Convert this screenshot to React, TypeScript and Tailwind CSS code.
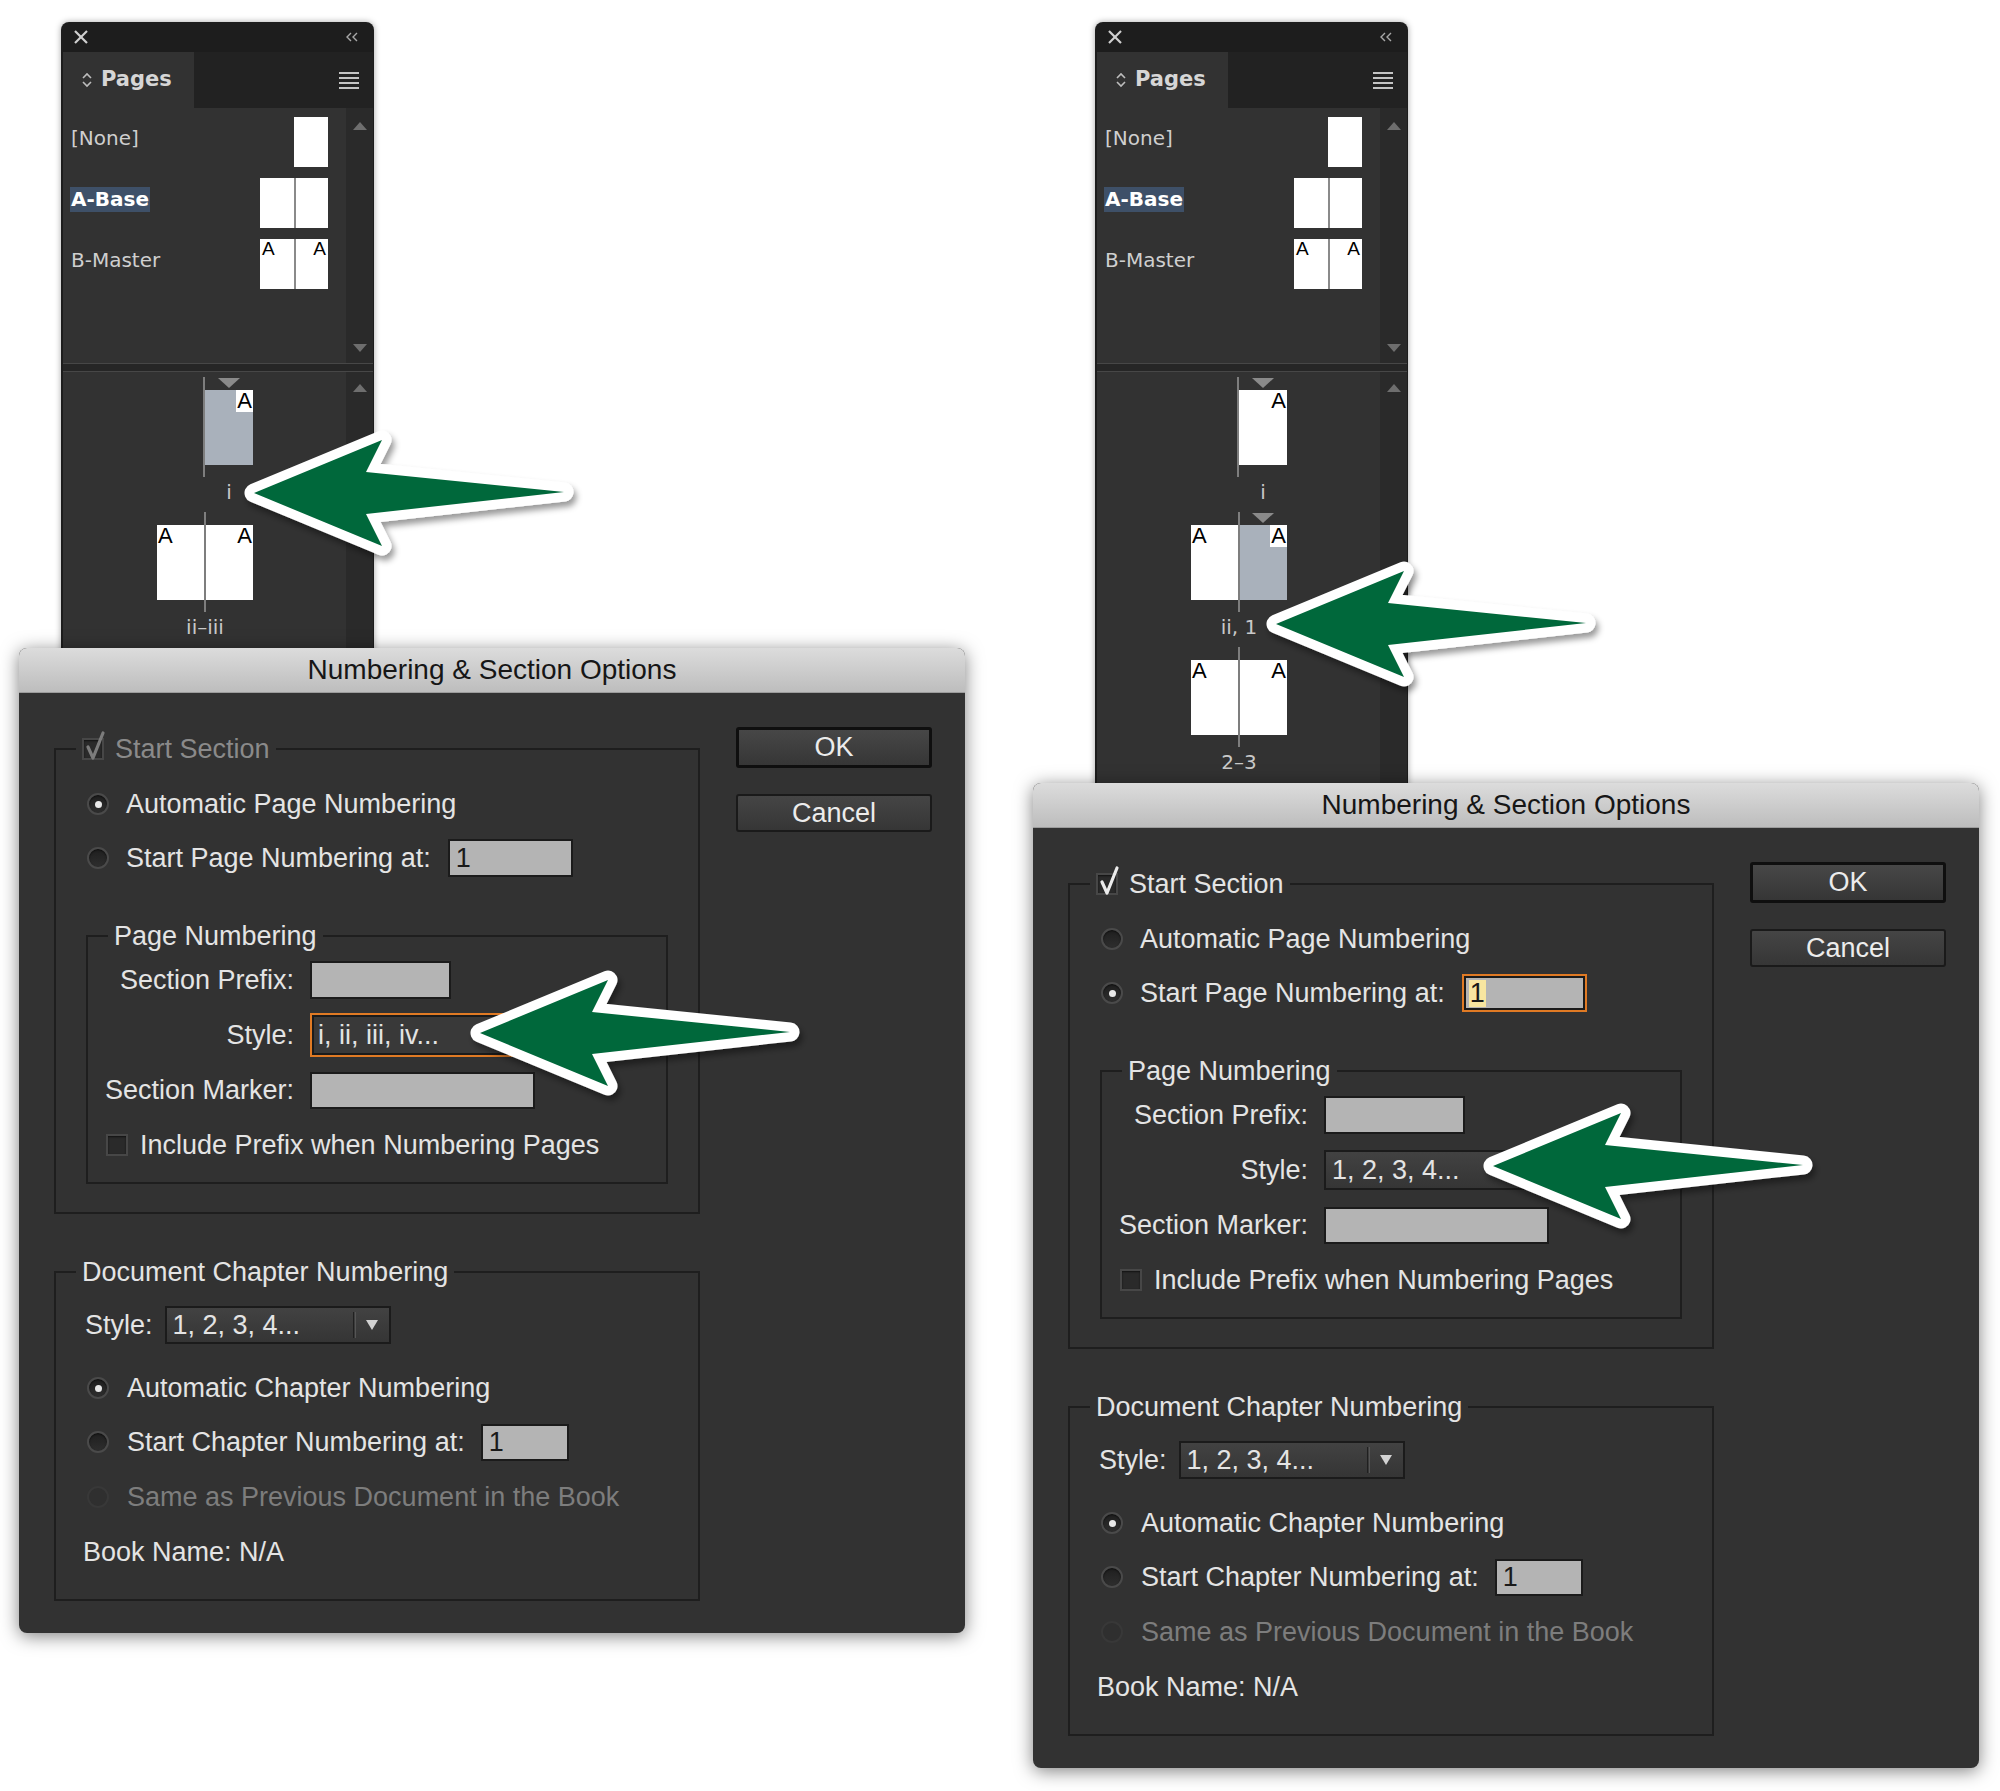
import React from "react";

type PageRowData = {
  spread?: boolean;
  sel?: boolean;
  marker?: boolean;
  label: string;
};

const leftRows: PageRowData[] = [
  { sel: true, marker: true, label: "i" },
  { spread: true, label: "ii–iii" },
];

const rightRows: PageRowData[] = [
  { marker: true, label: "i" },
  { spread: true, sel: true, marker: true, label: "ii, 1" },
  { spread: true, label: "2–3" },
];

const Chevrons = () => (
  <svg width="12" height="18" viewBox="0 0 12 18" fill="none" stroke="#bdbdbd" strokeWidth="1.6">
    <polyline points="2,7 6,3 10,7" />
    <polyline points="2,11 6,15 10,11" />
  </svg>
);

const Page: React.FC<{ side: "l" | "r"; sel?: boolean }> = ({ side, sel }) => (
  <div
    className={`w-[48px] h-[75px] flex items-start ${side === "r" ? "justify-end" : "justify-start"} ${
      sel ? "bg-[#a9b1bb]" : "bg-white"
    }`}
  >
    <span
      className={`font-['Liberation_Sans',Arial,sans-serif] text-[22px] leading-[22px] px-[1px] text-black ${
        sel ? "bg-white" : ""
      }`}
    >
      A
    </span>
  </div>
);

const PageRow: React.FC<{ row: PageRowData }> = ({ row }) => (
  <div className={`flex flex-col ${row.spread ? "ml-[94px] w-[96px]" : "ml-[142px] w-[48px]"}`}>
    <div className="relative h-[100px] pt-[13px] flex">
      {row.spread && <Page side="l" />}
      <Page side="r" sel={row.sel} />
      {/* spine */}
      <span className={`absolute top-0 bottom-0 w-[2px] bg-[#7e7e7e] ${row.spread ? "left-[47px]" : "left-[-2px]"}`} />
      {row.marker && (
        <span
          className={`absolute top-[1px] w-0 h-0 border-l-[11px] border-r-[11px] border-t-[10px] border-l-transparent border-r-transparent border-t-[#8a8a8a] ${
            row.spread ? "left-[61px]" : "left-[13px]"
          }`}
        />
      )}
    </div>
    <div className="h-[30px] flex items-center justify-center text-[20px] text-[#c9c9c9] whitespace-nowrap">
      {row.label}
    </div>
  </div>
);

const UpArrow = () => (
  <span className="w-0 h-0 border-l-[7px] border-r-[7px] border-b-[8px] border-l-transparent border-r-transparent border-b-[#6e6e6e]" />
);
const DownArrow = () => (
  <span className="w-0 h-0 border-l-[7px] border-r-[7px] border-t-[8px] border-l-transparent border-r-transparent border-t-[#6e6e6e]" />
);

const MasterThumb: React.FC<{ kind: "single" | "blank" | "a" }> = ({ kind }) => {
  if (kind === "single") return <div className="w-[34px] h-[50px] bg-white" />;
  return (
    <div className="flex">
      <div className="w-[34px] h-[50px] bg-white flex items-start">
        {kind === "a" && (
          <span className="font-['Liberation_Sans',Arial,sans-serif] text-[19px] leading-[19px] pl-[2px] text-black">A</span>
        )}
      </div>
      <div className="w-[34px] h-[50px] bg-white border-l-2 border-[#8a8a8a] flex items-start justify-end">
        {kind === "a" && (
          <span className="font-['Liberation_Sans',Arial,sans-serif] text-[19px] leading-[19px] pr-[2px] text-black">A</span>
        )}
      </div>
    </div>
  );
};

const PagesPanel: React.FC<{ right?: boolean }> = ({ right }) => {
  const rows = right ? rightRows : leftRows;
  return (
    <div
      className={`absolute top-[22px] w-[313px] rounded-t-[8px] overflow-hidden bg-[#1d1d1d] flex flex-col font-['DejaVu_Sans',sans-serif] shadow-[0_0_6px_rgba(0,0,0,0.35)] ${
        right ? "left-[1095px] h-[790px]" : "left-[61px] h-[650px]"
      }`}
    >
      {/* title strip */}
      <div className="h-[30px] shrink-0 flex items-center justify-between pl-[13px] pr-[15px]">
        <svg width="14" height="14" viewBox="0 0 14 14" stroke="#d0d0d0" strokeWidth="2.2">
          <line x1="1" y1="1" x2="13" y2="13" />
          <line x1="13" y1="1" x2="1" y2="13" />
        </svg>
        <svg width="14" height="10" viewBox="0 0 14 10" fill="none" stroke="#a8a8a8" strokeWidth="1.4">
          <polyline points="6,1 2,5 6,9" />
          <polyline points="12,1 8,5 12,9" />
        </svg>
      </div>
      {/* tab row */}
      <div className="h-[56px] shrink-0 flex pl-[2px] pr-[1px]">
        <div className="w-[131px] bg-[#323232] flex items-center pl-[18px] gap-[8px]">
          <Chevrons />
          <span className="text-[21px] font-bold text-[#d6d6d6]">Pages</span>
        </div>
        <div className="flex-1 bg-[#222222] flex items-center justify-end pr-[14px]">
          <div className="flex flex-col gap-[3px]">
            <span className="block w-[20px] h-[2px] bg-[#c4c4c4]" />
            <span className="block w-[20px] h-[2px] bg-[#c4c4c4]" />
            <span className="block w-[20px] h-[2px] bg-[#c4c4c4]" />
            <span className="block w-[20px] h-[2px] bg-[#c4c4c4]" />
          </div>
        </div>
      </div>
      {/* masters */}
      <div className="h-[255px] shrink-0 flex mx-[2px] mr-[1px] bg-[#323232]">
        <div className="flex-1 flex flex-col gap-[11px] pt-[9px] pl-[7px] pr-[18px]">
          <div className="h-[50px] flex items-center justify-between">
            <span className="mb-[8px] px-[1px] text-[20px] text-[#cfcfcf]">[None]</span>
            <MasterThumb kind="single" />
          </div>
          <div className="h-[50px] flex items-center justify-between">
            <span className="mb-[8px] px-[1px] h-[25px] flex items-center bg-[#3e5068] text-[20px] font-bold text-white">
              A-Base
            </span>
            <MasterThumb kind="blank" />
          </div>
          <div className="h-[50px] flex items-center justify-between">
            <span className="mb-[8px] px-[1px] text-[20px] text-[#cfcfcf]">B-Master</span>
            <MasterThumb kind="a" />
          </div>
        </div>
        <div className="w-[27px] bg-[#2a2a2a] flex flex-col items-center justify-between pt-[14px] pb-[11px]">
          <UpArrow />
          <DownArrow />
        </div>
      </div>
      {/* divider */}
      <div className="h-[9px] shrink-0 mx-[2px] mr-[1px] bg-[#262626] border-y border-[#474747]" />
      {/* pages */}
      <div className="flex-1 flex mx-[2px] mr-[1px] bg-[#323232]">
        <div className="flex-1 flex flex-col gap-[5px] pt-[5px]">
          {rows.map((r) => (
            <PageRow key={r.label} row={r} />
          ))}
        </div>
        <div className="w-[27px] bg-[#2a2a2a] flex flex-col items-center pt-[12px]">
          <UpArrow />
        </div>
      </div>
    </div>
  );
};

const Radio: React.FC<{ on?: boolean; dim?: boolean }> = ({ on, dim }) => (
  <span
    className={`w-[22px] h-[22px] shrink-0 rounded-full border-2 flex items-center justify-center ${
      dim
        ? "border-[#383838] bg-[#2f2f2f]"
        : "border-[#4a4a4a] bg-[linear-gradient(#1f1f1f,#2e2e2e)] shadow-[inset_0_1px_2px_rgba(0,0,0,0.6)]"
    }`}
  >
    {on && <span className="w-[7px] h-[7px] rounded-full bg-[#e8e8e8]" />}
  </span>
);

const Checkbox: React.FC<{ checked?: boolean; dim?: boolean }> = ({ checked, dim }) => (
  <span className="relative w-[22px] h-[22px] shrink-0 border-2 border-[#474747] bg-[#2a2a2a] shadow-[inset_0_1px_2px_rgba(0,0,0,0.6)]">
    {checked && (
      <svg
        className="absolute left-[1px] top-[-10px]"
        width="22"
        height="32"
        viewBox="0 0 22 32"
        fill="none"
        stroke={dim ? "#7c7c7c" : "#ececec"}
        strokeWidth="3.2"
        strokeLinecap="round"
        strokeLinejoin="round"
      >
        <polyline points="3,17 8,28 18,3" />
      </svg>
    )}
  </span>
);

const Group: React.FC<{ legend: React.ReactNode; className: string; children: React.ReactNode }> = ({
  legend,
  className,
  children,
}) => (
  <div className={`border-2 border-[#1e1e1e] flex flex-col ${className}`}>
    <div className="-mt-[17px] ml-[20px] w-fit h-[32px] px-[6px] bg-[#323232] flex items-center whitespace-nowrap">
      {legend}
    </div>
    {children}
  </div>
);

const Dropdown: React.FC<{ value: string; orange?: boolean; h: string }> = ({ value, orange, h }) => (
  <div
    className={`w-[226px] ${h} shrink-0 border-2 flex items-center ${
      orange
        ? "border-[#e07a24] shadow-[inset_0_0_0_2px_#1b1b1b] bg-[#393939]"
        : "border-[#1b1b1b] bg-[linear-gradient(#424242,#353535)]"
    }`}
  >
    <span className="flex-1 pl-[6px] whitespace-nowrap">{value}</span>
    <span className="w-[3px] h-[26px] border-l border-r border-l-[#202020] border-r-[#555555]" />
    <span className="w-[33px] flex justify-center">
      <span className="w-0 h-0 border-l-[6px] border-r-[6px] border-t-[10px] border-l-transparent border-r-transparent border-t-[#d2d2d2]" />
    </span>
  </div>
);

const Dialog: React.FC<{ alt?: boolean }> = ({ alt }) => (
  <div
    className={`absolute w-[946px] h-[985px] rounded-[8px] overflow-hidden bg-[#323232] shadow-[0_3px_18px_rgba(0,0,0,0.5)] font-['Liberation_Sans',Arial,sans-serif] text-[27px] leading-none text-[#e4e4e4] ${
      alt ? "left-[1033px] top-[783px]" : "left-[19px] top-[648px]"
    }`}
  >
    <div className="h-[45px] bg-[linear-gradient(#dcdcdc,#bdbdbd)] border-b border-[#9c9c9c] flex items-center justify-center text-[28px] text-[#161616]">
      Numbering &amp; Section Options
    </div>
    <div className="flex items-start pl-[35px]">
      <div className="w-[646px] mt-[55px] flex flex-col">
        {/* Start Section */}
        <Group
          className="h-[466px]"
          legend={
            <>
              <Checkbox checked dim={!alt} />
              <span className={`ml-[11px] ${alt ? "text-[#e4e4e4]" : "text-[#8a8a8a]"}`}>Start Section</span>
            </>
          }
        >
          <div className="mt-[19px] ml-[31px] h-[40px] flex items-center">
            <Radio on={!alt} />
            <span className="ml-[17px]">Automatic Page Numbering</span>
          </div>
          <div className="mt-[14px] ml-[31px] h-[40px] flex items-center">
            <Radio on={alt} />
            <span className="ml-[17px]">Start Page Numbering at:</span>
            <div
              className={`ml-[17px] w-[125px] h-[38px] border-2 bg-[#b4b4b4] flex items-center pl-[5px] text-[#1a1a1a] ${
                alt ? "border-[#e07a24] shadow-[inset_0_0_0_2px_#1b1b1b]" : "border-[#1b1b1b]"
              }`}
            >
              <span className={alt ? "bg-[#f8e6a0] px-[1px]" : "px-[1px]"}>1</span>
            </div>
          </div>

          {/* Page Numbering */}
          <Group className="mt-[57px] ml-[30px] w-[582px] h-[249px]" legend={<span>Page Numbering</span>}>
            <div className="mt-[8px] h-[40px] flex items-center">
              <span className="w-[206px] text-right">Section Prefix:</span>
              <div className="ml-[16px] w-[141px] h-[38px] border-2 border-[#1b1b1b] bg-[#b4b4b4]" />
            </div>
            <div className="mt-[15px] h-[40px] flex items-center">
              <span className="w-[206px] text-right">Style:</span>
              <div className="ml-[16px]">
                <Dropdown value={alt ? "1, 2, 3, 4..." : "i, ii, iii, iv..."} orange={!alt} h={alt ? "h-[40px]" : "h-[44px]"} />
              </div>
            </div>
            <div className="mt-[15px] h-[40px] flex items-center">
              <span className="w-[206px] text-right">Section Marker:</span>
              <div className="ml-[16px] w-[225px] h-[37px] border-2 border-[#1b1b1b] bg-[#b4b4b4]" />
            </div>
            <div className="mt-[15px] ml-[18px] h-[40px] flex items-center">
              <Checkbox />
              <span className="ml-[12px]">Include Prefix when Numbering Pages</span>
            </div>
          </Group>
        </Group>

        {/* Document Chapter Numbering */}
        <Group className="mt-[57px] h-[330px]" legend={<span>Document Chapter Numbering</span>}>
          <div className="mt-[17px] ml-[29px] h-[40px] flex items-center">
            <span>Style:</span>
            <div className="ml-[12px]">
              <Dropdown value="1, 2, 3, 4..." h="h-[38px]" />
            </div>
          </div>
          <div className="mt-[23px] ml-[31px] h-[40px] flex items-center">
            <Radio on />
            <span className="ml-[18px]">Automatic Chapter Numbering</span>
          </div>
          <div className="mt-[14px] ml-[31px] h-[40px] flex items-center">
            <Radio />
            <span className="ml-[18px]">Start Chapter Numbering at:</span>
            <div className="ml-[16px] w-[88px] h-[37px] border-2 border-[#1b1b1b] bg-[#b4b4b4] flex items-center pl-[6px] text-[#1a1a1a]">
              1
            </div>
          </div>
          <div className="mt-[15px] ml-[31px] h-[40px] flex items-center">
            <Radio dim />
            <span className="ml-[18px] text-[#7d7d7d]">Same as Previous Document in the Book</span>
          </div>
          <div className="mt-[15px] ml-[27px] h-[40px] flex items-center">
            <span>Book Name: N/A</span>
          </div>
        </Group>
      </div>

      <div className="ml-[36px] mt-[34px] flex flex-col gap-[26px]">
        <div className="w-[196px] h-[41px] border-[3px] border-[#0f0f0f] rounded-[3px] bg-[linear-gradient(#474747,#363636)] flex items-center justify-center text-[#ececec]">
          OK
        </div>
        <div className="w-[196px] h-[38px] border-2 border-[#1a1a1a] rounded-[3px] bg-[linear-gradient(#454545,#363636)] flex items-center justify-center text-[#ececec]">
          Cancel
        </div>
      </div>
    </div>
  </div>
);

// green callout arrows, tip coordinates
const arrows = [
  [254, 493],
  [480, 1033],
  [1276, 624],
  [1493, 1166],
];

const arrowPoints = "0,0 128,-53 112,-21 310,-1 112,21 128,53";

const Arrows = () => (
  <svg className="absolute left-0 top-0 pointer-events-none" width="2000" height="1791" viewBox="0 0 2000 1791">
    <defs>
      <filter id="arrowShadow" x="-20%" y="-50%" width="140%" height="200%">
        <feDropShadow dx="3" dy="5" stdDeviation="3" floodColor="#000" floodOpacity="0.4" />
      </filter>
    </defs>
    {arrows.map(([x, y]) => (
      <g key={`${x}-${y}`} transform={`translate(${x} ${y})`} filter="url(#arrowShadow)">
        <polygon points={arrowPoints} fill="#ffffff" stroke="#ffffff" strokeWidth="19" strokeLinejoin="round" />
        <polygon points={arrowPoints} fill="#00673a" />
      </g>
    ))}
  </svg>
);

export default function App() {
  return (
    <div className="relative w-[2000px] h-[1791px] bg-white overflow-hidden">
      <PagesPanel />
      <PagesPanel right />
      <Dialog />
      <Dialog alt />
      <Arrows />
    </div>
  );
}
